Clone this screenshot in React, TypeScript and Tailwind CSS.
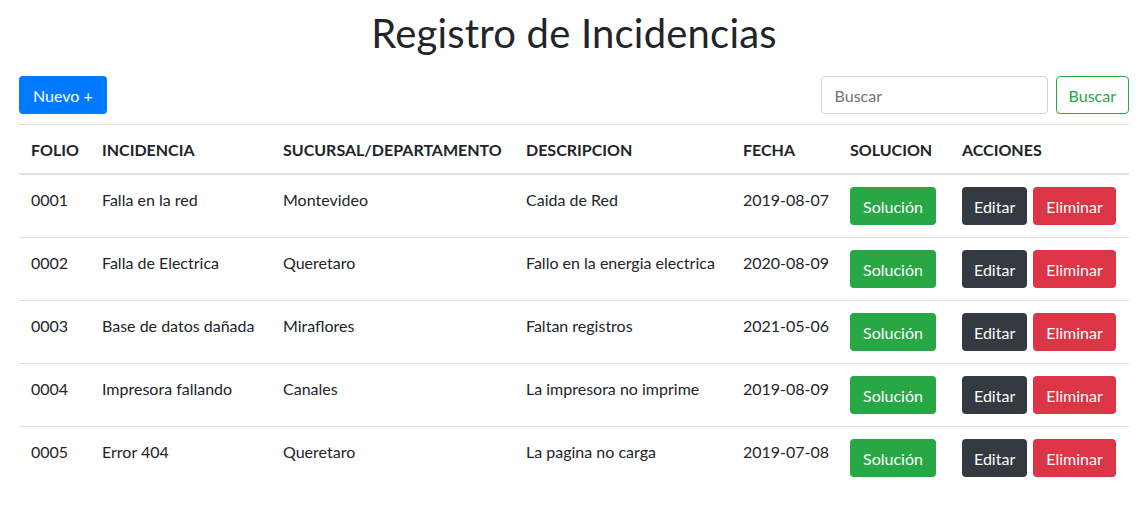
import React from "react";

const rows = [
  ["0001", "Falla en la red", "Montevideo", "Caida de Red", "2019-08-07"],
  ["0002", "Falla de Electrica", "Queretaro", "Fallo en la energia electrica", "2020-08-09"],
  ["0003", "Base de datos dañada", "Miraflores", "Faltan registros", "2021-05-06"],
  ["0004", "Impresora fallando", "Canales", "La impresora no imprime", "2019-08-09"],
  ["0005", "Error 404", "Queretaro", "La pagina no carga", "2019-07-08"],
];

export default function App() {
  return (
    <div
      className="min-h-[509px] bg-white text-[#212529] text-[16px] leading-[24px]"
      style={{ fontFamily: 'Lato, "Open Sans", sans-serif' }}
    >
      <div className="px-[19px]">
        <h1 className="text-center text-[40px] leading-[48px] pt-[9px] pb-[-1px] mb-[19px] font-normal tracking-[0.2px]">
          Registro de Incidencias
        </h1>
        <div className="flex items-center justify-between h-[38px]">
          <button className="h-[38px] pl-[14px] pr-[14px] pt-[1px] rounded-[4px] bg-[#007bff] text-white">
            Nuevo +
          </button>
          <div className="flex gap-[8px]">
            <input
              placeholder="Buscar"
              className="w-[227px] h-[38px] px-[13px] pt-[1px] border border-[#ced4da] rounded-[4px] placeholder:text-[#6c757d] outline-none"
            />
            <button className="h-[38px] px-[12px] pt-[1px] rounded-[4px] border border-[#28a745] text-[#28a745]">
              Buscar
            </button>
          </div>
        </div>
        <table className="mt-[10px] w-[1110px] table-fixed border-collapse">
          <colgroup>
            <col className="w-[71px]" />
            <col className="w-[181px]" />
            <col className="w-[243px]" />
            <col className="w-[217px]" />
            <col className="w-[107px]" />
            <col className="w-[112px]" />
            <col className="w-[179px]" />
          </colgroup>
          <thead>
            <tr className="border-t border-[#dee2e6] border-b-2">
              {["FOLIO", "INCIDENCIA", "SUCURSAL/DEPARTAMENTO", "DESCRIPCION", "FECHA", "SOLUCION", "ACCIONES"].map((h) => (
                <th key={h} className="px-[12px] pt-[13px] pb-[11px] text-left font-bold align-bottom whitespace-nowrap">
                  {h}
                </th>
              ))}
            </tr>
          </thead>
          <tbody>
            {rows.map((r, i) => (
              <tr key={r[0]} className={i > 0 ? "border-t border-[#dee2e6]" : ""}>
                {r.map((c, j) => (
                  <td key={j} className="px-[12px] pt-[13px] pb-[11px] align-top whitespace-nowrap">
                    {c}
                  </td>
                ))}
                <td className="p-[12px] align-top">
                  <button className="h-[38px] px-[13px] pt-[1px] rounded-[4px] bg-[#28a745] text-white">Solución</button>
                </td>
                <td className="p-[12px] align-top">
                  <div className="flex gap-[6px]">
                    <button className="h-[38px] px-[12px] pt-[1px] rounded-[4px] bg-[#343a40] text-white">Editar</button>
                    <button className="h-[38px] px-[13px] pt-[1px] rounded-[4px] bg-[#dc3545] text-white">Eliminar</button>
                  </div>
                </td>
              </tr>
            ))}
          </tbody>
        </table>
      </div>
    </div>
  );
}
